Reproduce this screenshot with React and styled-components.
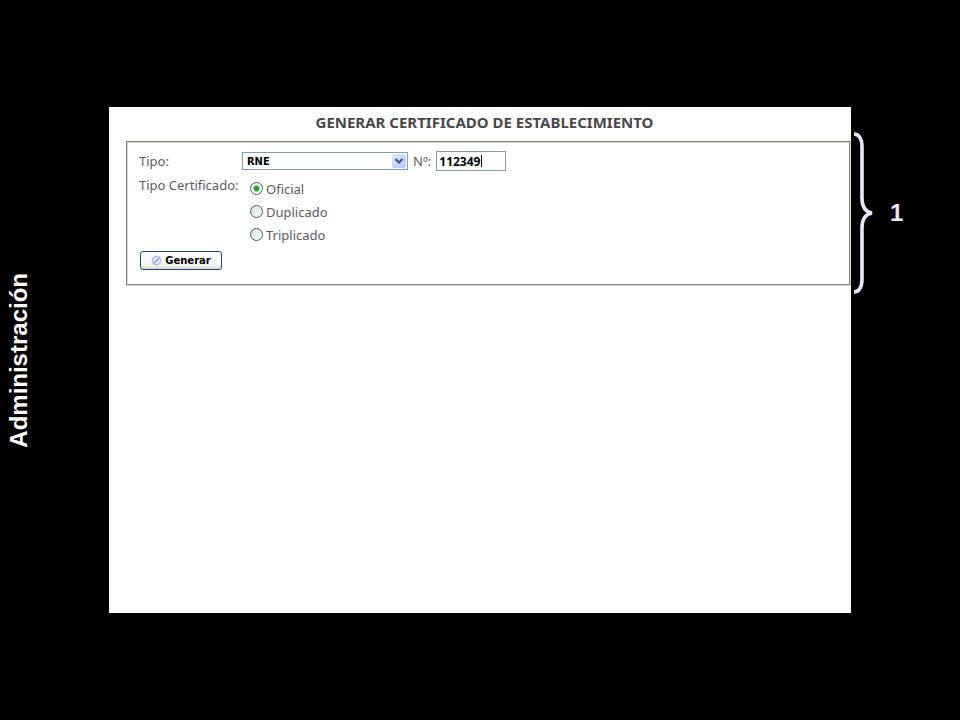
import React from 'react';
import styled, { createGlobalStyle } from 'styled-components';

const GlobalStyle = createGlobalStyle`
    *{
        box-sizing: border-box;
    }
    body{
        margin: 0;
        background-color: #000;
    }
`

const Page = styled.div`
    display: grid;
    grid-template-columns: 109px minmax(0, 1fr) 109px;
    min-height: 100vh;
    padding: 107px 0;
    font-family: "Noto Sans", sans-serif;
    font-size: 13px;
    color: #5c5c60;
`

const Side = styled.aside`
    display: flex;
    align-items: center;
    padding-left: 5px;
`

const SideTitle = styled.h1`
    margin: 0;
    writing-mode: vertical-rl;
    transform: rotate(180deg);
    font-family: "Liberation Sans", Arial, sans-serif;
    font-size: 24px;
    line-height: 28px;
    font-weight: bold;
    color: #fff;
`

const Panel = styled.main`
    background-color: #fff;
    padding: 7px 0 0 17px;
`

const Title = styled.h2`
    margin: 0 0 11px;
    padding-right: 8px;
    font-size: 15px;
    line-height: 16px;
    font-weight: bold;
    text-align: center;
    color: #48484a;
`

const Form = styled.form`
    display: grid;
    grid-template-columns: 103px minmax(0, 1fr);
    row-gap: 4px;
    border: 2px groove #d8d8cc;
    padding: 8px 11px 14px;
`

const Label = styled.label`
    line-height: 20px;
    white-space: nowrap;
`

const Fields = styled.div`
    display: flex;
    align-items: center;
    gap: 5px;
`

const SelectBox = styled.div`
    position: relative;
    width: 166px;
    height: 18px;
`

const Select = styled.select`
    appearance: none;
    display: block;
    width: 100%;
    height: 100%;
    border: 1px solid #7f9db9;
    border-radius: 0;
    padding: 0 20px 0 4px;
    background-color: #fff;
    font-family: "DejaVu Sans Condensed", sans-serif;
    font-size: 11px;
    font-weight: bold;
    color: #000;
`

const Arrow = styled.span`
    position: absolute;
    top: 2px;
    right: 2px;
    bottom: 2px;
    width: 14px;
    display: flex;
    align-items: center;
    justify-content: center;
    border-radius: 2px;
    background: linear-gradient(135deg, #dbe5fe, #b2c6f6);
    pointer-events: none;
`

const InputBox = styled.div`
    position: relative;
    width: 70px;
    height: 20px;
`

const Input = styled.input`
    display: block;
    width: 100%;
    height: 100%;
    border: 1px solid #7f9db9;
    padding: 0 2px;
    background-color: #fff;
    font-family: "Noto Sans", sans-serif;
    font-size: 12px;
    font-weight: bold;
    color: #000;
`

const Caret = styled.span`
    position: absolute;
    top: 4px;
    left: 45px;
    width: 1px;
    height: 12px;
    background-color: #000;
`

const Options = styled.div`
    display: flex;
    flex-direction: column;
    align-items: flex-start;
    padding: 3px 0 0 8px;
`

const Option = styled.label`
    display: flex;
    align-items: center;
    gap: 3px;
    line-height: 23px;
`

const Radio = styled.input`
    appearance: none;
    width: 13px;
    height: 13px;
    margin: 0 0 2px;
    border: 1px solid #35608f;
    border-radius: 50%;
    background: linear-gradient(135deg, #dcdcd8, #fff);
    &:checked{
        background: radial-gradient(circle, #21a121 0 2px, #fff 4px);
    }
`

const Button = styled.button`
    grid-column: 1 / -1;
    justify-self: start;
    display: flex;
    align-items: center;
    justify-content: center;
    gap: 3px;
    width: 82px;
    height: 19px;
    margin-left: 1px;
    border: 1px solid #1f4a7c;
    border-radius: 3px;
    padding: 0;
    background: linear-gradient(#fff, #f3f3ee 80%, #d9d5ca);
    font-family: "DejaVu Sans", sans-serif;
    font-size: 10px;
    font-weight: bold;
    color: #000;
`

const Note = styled.aside`
    display: flex;
    align-items: center;
    align-self: start;
    gap: 17px;
    padding: 25px 0 0 2px;
    font-family: "Liberation Sans", Arial, sans-serif;
    font-size: 24px;
    font-weight: bold;
    color: #e6e6fa;
`

const types = ['Oficial', 'Duplicado', 'Triplicado'];

function App() {
    return (
        <Page>
            <GlobalStyle />
            <Side>
                <SideTitle>Administración</SideTitle>
            </Side>
            <Panel>
                <Title>GENERAR CERTIFICADO DE ESTABLECIMIENTO</Title>
                <Form onSubmit={(e) => e.preventDefault()}>
                    <Label htmlFor="tipo">Tipo:</Label>
                    <Fields>
                        <SelectBox>
                            <Select id="tipo" defaultValue="RNE">
                                <option>RNE</option>
                            </Select>
                            <Arrow>
                                <svg width="10" height="8" viewBox="0 0 10 8">
                                    <path d="M1.5 2 L5 5.5 L8.5 2" fill="none" stroke="#42597f" strokeWidth="2.2" />
                                </svg>
                            </Arrow>
                        </SelectBox>
                        <Label htmlFor="numero">Nº:</Label>
                        <InputBox>
                            <Input id="numero" type="text" defaultValue="112349" />
                            <Caret />
                        </InputBox>
                    </Fields>
                    <Label as="span" id="tipo-certificado">Tipo Certificado:</Label>
                    <Options role="radiogroup" aria-labelledby="tipo-certificado">
                        {types.map((type, i) => (
                            <Option key={type}>
                                <Radio type="radio" name="certificado" value={type} defaultChecked={i === 0} />
                                {type}
                            </Option>
                        ))}
                    </Options>
                    <Button type="submit">
                        <svg width="11" height="11" viewBox="0 0 11 11">
                            <circle cx="5.5" cy="5.5" r="4.2" fill="#dfe6fa" stroke="#b3c0ea" strokeWidth="1.4" />
                            <path d="M3 8 L8 3" stroke="#8b9fd8" strokeWidth="1.4" />
                        </svg>
                        Generar
                    </Button>
                </Form>
            </Panel>
            <Note>
                <svg width="20" height="162" viewBox="0 0 20 162" fill="none" stroke="#e6e6fa">
                    <path d="M1 2 C6 2 9 7 9 14 V66 C9 75 13 80 19 81 C13 82 9 87 9 96 V147 C9 155 6 160 1 160" strokeWidth="3.6" />
                </svg>
                <span>1</span>
            </Note>
        </Page>
    );
}

export default App;
